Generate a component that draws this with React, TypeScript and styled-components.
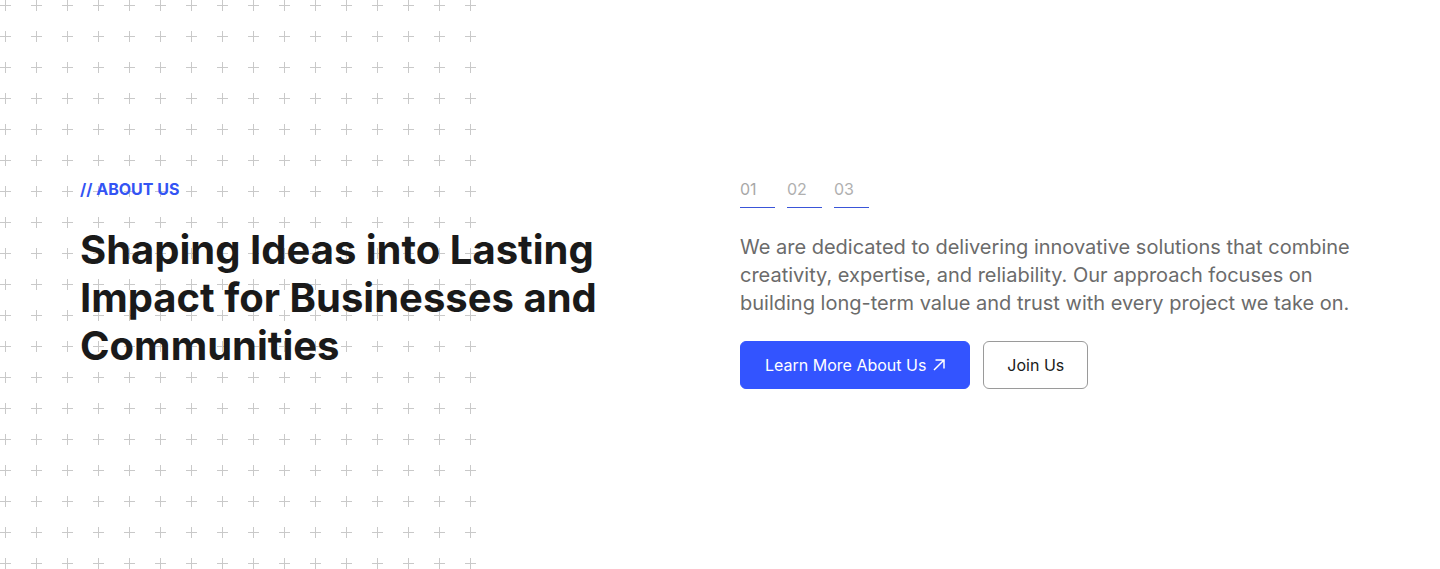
import * as React from 'react'
import styled, { createGlobalStyle } from 'styled-components'

const GlobalStyle = createGlobalStyle`
    html, body {
        margin: 0;
        padding: 0;
        background: #ffffff;
    }
    body {
        font-family: Inter, "Noto Sans", sans-serif;
        -webkit-font-smoothing: antialiased;
    }
    * { box-sizing: border-box; }
`

const plusTile = `url("data:image/svg+xml,%3Csvg xmlns='http://www.w3.org/2000/svg' width='31' height='31'%3E%3Cpath d='M5.5 0v11M0 5.5h11' stroke='%23c9c9c9' stroke-width='1'/%3E%3C/svg%3E")`

const Section = styled.section`
    position: relative;
    height: 569px;
    display: grid;
    grid-template-columns: 660px 1fr;
    padding: 179px 0 0 80px;
    overflow: hidden;

    &::before {
        content: '';
        position: absolute;
        left: 0;
        top: 0;
        width: 481px;
        height: 100%;
        background-image: ${plusTile};
        background-size: 31px 31px;
        background-position: 0 0;
        z-index: 0;
    }
`

const Column = styled.div`
    position: relative;
    z-index: 1;
    display: flex;
    flex-direction: column;
    align-items: flex-start;
`

const Label = styled.span`
    font-size: 16px;
    line-height: 20px;
    font-weight: 700;
    color: #3354f4;
`

const Heading = styled.h2`
    margin: 27px 0 0;
    font-size: 40px;
    line-height: 48px;
    font-weight: 700;
    color: #1a1a1a;
    letter-spacing: 0;
    max-width: 540px;
`

const Tabs = styled.div`
    display: flex;
    gap: 12px;
`

const Tab = styled.div<{ $active?: boolean }>`
    width: 35px;
    font-size: 16px;
    line-height: 20px;
    font-weight: 400;
    color: ${p => (p.$active ? '#a8a8a8' : '#b0b0b0')};
    padding-bottom: 8px;
    border-bottom: 1.5px solid #3a55d8;
`

const Text = styled.p`
    margin: 25px 0 0;
    max-width: 620px;
    font-size: 20px;
    line-height: 28px;
    color: #6b6b6b;
`

const Actions = styled.div`
    margin-top: 24px;
    display: flex;
    gap: 13px;
`

const Button = styled.button<{ $variant: 'primary' | 'outline' }>`
    height: 48px;
    padding: 0 ${p => (p.$variant === 'primary' ? 24 : 23)}px;
    display: inline-flex;
    align-items: center;
    gap: 7px;
    border-radius: 6px;
    font-family: Inter, "Noto Sans", sans-serif;
    font-size: 16px;
    cursor: pointer;
    ${p => p.$variant === 'primary'
        ? `background: #3354ff; color: #ffffff; border: 1px solid #3354ff;`
        : `background: #ffffff; color: #1a1a1a; border: 1px solid #9a9a9a;`}
`

const Arrow = () => (
    <svg width="12" height="12" viewBox="0 0 12 12" fill="none" stroke="currentColor" strokeWidth="1.5">
        <path d="M1 11L11 1M2.5 1H11V9.5" />
    </svg>
)

export default function App(): React.ReactElement {
    return (
        <>
            <GlobalStyle />
            <Section>
                <Column>
                    <Label>// ABOUT US</Label>
                    <Heading>Shaping Ideas into Lasting Impact for Businesses and Communities</Heading>
                </Column>
                <Column>
                    <Tabs>
                        <Tab $active>01</Tab>
                        <Tab>02</Tab>
                        <Tab>03</Tab>
                    </Tabs>
                    <Text>
                        We are dedicated to delivering innovative solutions that combine creativity, expertise,
                        and reliability. Our approach focuses on building long-term value and trust with every
                        project we take on.
                    </Text>
                    <Actions>
                        <Button $variant="primary">
                            Learn More About Us <Arrow />
                        </Button>
                        <Button $variant="outline">Join Us</Button>
                    </Actions>
                </Column>
            </Section>
        </>
    )
}
